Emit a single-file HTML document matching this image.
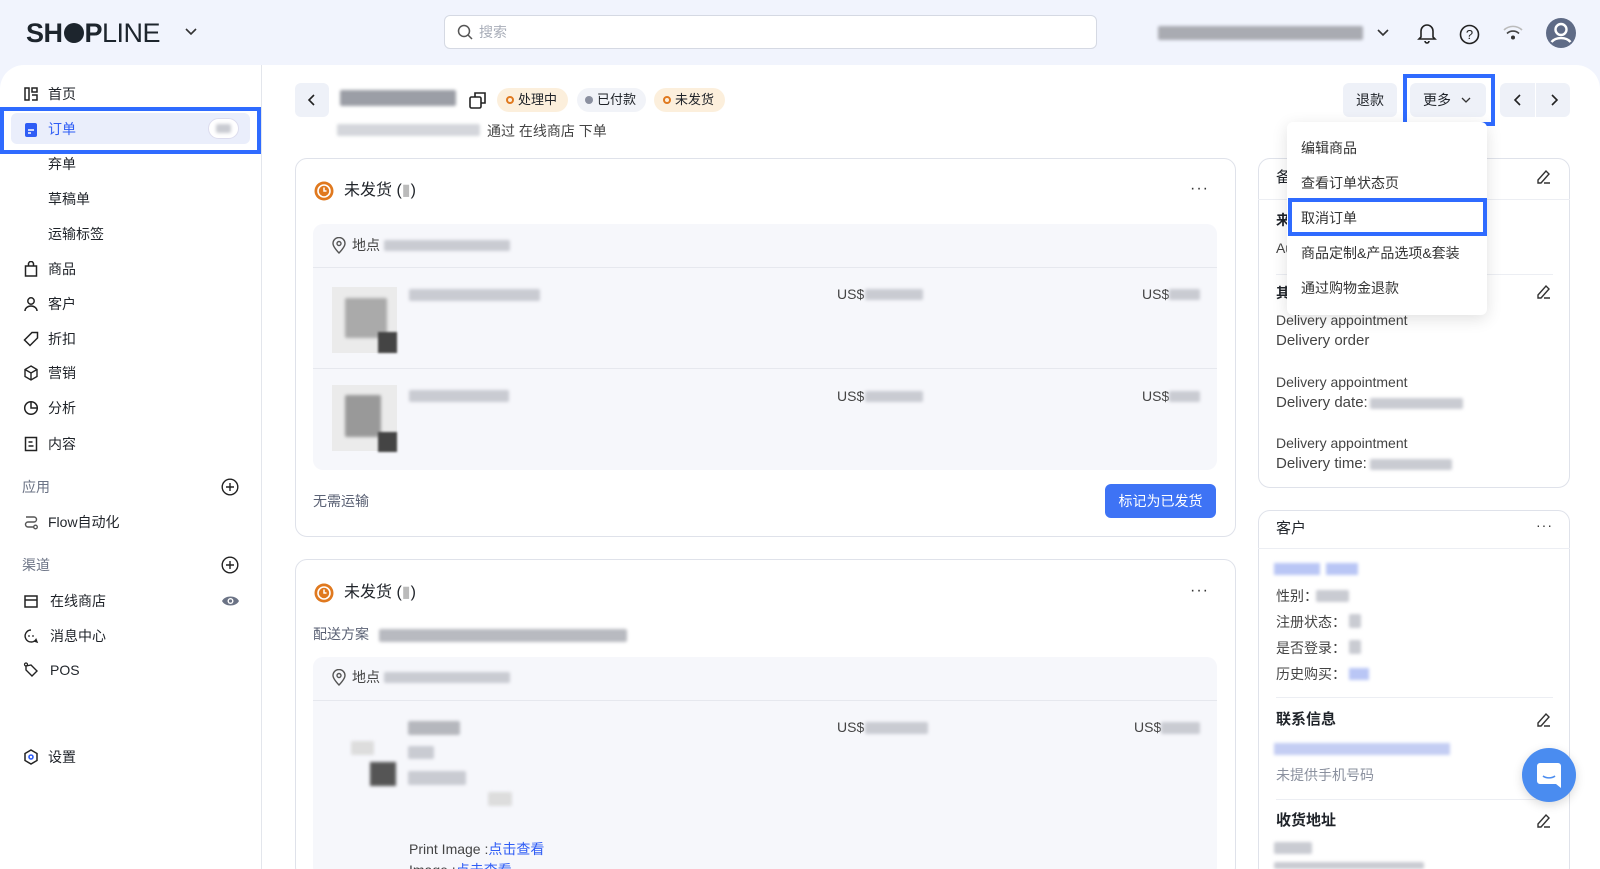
<!DOCTYPE html>
<html style="width:1600px;height:869px;overflow:hidden"><head><meta charset="utf-8">
<style>
*{box-sizing:border-box;margin:0;padding:0}
body{width:1600px;height:869px;overflow:hidden;background:#f1f4fd;font-family:"Liberation Sans","Noto Sans CJK SC",sans-serif;color:#1f2329;font-size:14px;position:relative}
.a{position:absolute}
.t{position:absolute;white-space:nowrap;line-height:20px}
.blur{position:absolute;background:#c9cbd2;filter:blur(1.5px);border-radius:2px}
.bb{position:absolute;background:#b9c6f5;filter:blur(1.5px)}
.nav{position:absolute;left:48px;font-size:14px;line-height:20px}
.ic{position:absolute;left:23px;width:16px;height:16px}
.card{position:absolute;background:#fff;border:1px solid #dfe2ea;border-radius:12px}
.sec{color:#6b7385;font-size:14px}
.dots{position:absolute;font-size:16px;letter-spacing:1px;color:#333}
</style></head><body>
<div class="t" style="left:26px;top:17px;font-size:27px;line-height:32px;font-weight:bold;color:#1d252d;letter-spacing:-0.5px">SH<span style="display:inline-block;width:20px;height:20px;border-radius:50%;background:#1d252d;vertical-align:-1px;margin:0 1px"></span>P<span style="font-weight:normal">LINE</span></div>
<svg class="a" style="left:184px;top:27px" width="14" height="10" viewBox="0 0 14 10"><path d="M2 2l5 5 5-5" fill="none" stroke="#333" stroke-width="1.6"/></svg>
<div class="a" style="left:444px;top:15px;width:653px;height:34px;background:#fff;border:1px solid #d5d9e3;border-radius:6px"></div>
<svg class="a" style="left:457px;top:24px" width="16" height="16" viewBox="0 0 16 16"><circle cx="7" cy="7" r="5.5" fill="none" stroke="#555" stroke-width="1.5"/><path d="M11 11l4 4" stroke="#555" stroke-width="1.5"/></svg>
<div class="t" style="left:479px;top:22px;color:#a8adb8">搜索</div>
<div class="blur" style="left:1158px;top:26px;width:205px;height:14px;background:#a9abb2"></div>
<svg class="a" style="left:1376px;top:28px" width="14" height="10"><path d="M2 2l5 5 5-5" fill="none" stroke="#333" stroke-width="1.6"/></svg>
<svg class="a" style="left:1417px;top:22px" width="20" height="22" viewBox="0 0 20 22"><path d="M4 15V9a6 6 0 0112 0v6l2 2H2zM8 19a2 2 0 004 0" fill="none" stroke="#222" stroke-width="1.6"/></svg>
<svg class="a" style="left:1459px;top:24px" width="21" height="21"><circle cx="10.5" cy="10.5" r="9" fill="none" stroke="#222" stroke-width="1.6"/><text x="10.5" y="15" font-size="13" text-anchor="middle" font-family="Liberation Sans" fill="#222">?</text></svg>
<svg class="a" style="left:1502px;top:25px" width="22" height="16" viewBox="0 0 22 16"><path d="M2 5a13 13 0 0118 0" fill="none" stroke="#bbb" stroke-width="1.6"/><path d="M5 8.5a8.5 8.5 0 0112 0" fill="none" stroke="#444" stroke-width="1.6"/><circle cx="11" cy="12.5" r="2" fill="#333"/></svg>
<svg class="a" style="left:1545px;top:17px" width="32" height="32" viewBox="0 0 32 32"><circle cx="16" cy="16" r="15" fill="#5f6b86"/><circle cx="16" cy="12.5" r="5.5" fill="none" stroke="#fff" stroke-width="2.4"/><path d="M6.5 25a11 8 0 0119 0" fill="none" stroke="#fff" stroke-width="2.4"/></svg>

<div class="a" style="left:0;top:65px;width:1600px;height:804px;background:#fff;border-radius:24px 24px 0 0"></div>
<div class="a" style="left:261px;top:65px;width:1px;height:804px;background:#e3e6ec"></div>

<div class="a" style="left:0;top:107px;width:261px;height:47px;border:4px solid #2f6bff"></div>
<div class="a" style="left:11px;top:113px;width:239px;height:31px;background:#eaeefb;border-radius:6px"></div>
<div class="a" style="left:208px;top:118px;width:31px;height:21px;background:#fff;border:1px solid #dde;border-radius:11px"></div>
<div class="blur" style="left:216px;top:124px;width:15px;height:9px"></div>
<svg class="ic" style="top:86px" viewBox="0 0 16 16"><path d="M2 2h4v12H2zM9 2h5v4H9zM9 9h5v5H9" fill="none" stroke="#222" stroke-width="1.5"/></svg>
<div class="nav" style="top:84px">首页</div>
<svg class="ic" style="top:122px" viewBox="0 0 16 16"><rect x="2" y="1" width="12" height="14" rx="2" fill="#2f5df5"/><path d="M5 8h6M5 11h3" stroke="#fff" stroke-width="1.5"/></svg>
<div class="nav" style="top:119px;color:#2f5df5">订单</div>
<div class="nav" style="top:154px">弃单</div>
<div class="nav" style="top:189px">草稿单</div>
<div class="nav" style="top:224px">运输标签</div>
<svg class="ic" style="top:261px" viewBox="0 0 16 16"><path d="M2.5 5h11v10h-11zM5.5 5V3a2.5 2.5 0 015 0v2" fill="none" stroke="#222" stroke-width="1.5"/></svg>
<div class="nav" style="top:259px">商品</div>
<svg class="ic" style="top:296px" viewBox="0 0 16 16"><circle cx="8" cy="5" r="3.2" fill="none" stroke="#222" stroke-width="1.5"/><path d="M2 15a6 5 0 0112 0" fill="none" stroke="#222" stroke-width="1.5"/></svg>
<div class="nav" style="top:294px">客户</div>
<svg class="ic" style="top:331px" viewBox="0 0 16 16"><path d="M9 1.5h5.5V7L7 14.5 1.5 9z" fill="none" stroke="#222" stroke-width="1.5"/></svg>
<div class="nav" style="top:329px">折扣</div>
<svg class="ic" style="top:365px" viewBox="0 0 16 16"><path d="M8 1l6 3.5v7L8 15l-6-3.5v-7zM2 4.5L8 8l6-3.5M8 8v7" fill="none" stroke="#222" stroke-width="1.4"/></svg>
<div class="nav" style="top:363px">营销</div>
<svg class="ic" style="top:400px" viewBox="0 0 16 16"><circle cx="8" cy="8" r="6.3" fill="none" stroke="#222" stroke-width="1.5"/><path d="M8 1.7V8h6.3" fill="none" stroke="#222" stroke-width="1.5"/></svg>
<div class="nav" style="top:398px">分析</div>
<svg class="ic" style="top:436px" viewBox="0 0 16 16"><path d="M2.5 1.5h11v13h-11zM5.5 6h4M5.5 10h5" fill="none" stroke="#222" stroke-width="1.5"/></svg>
<div class="nav" style="top:434px">内容</div>
<div class="t sec" style="left:22px;top:477px">应用</div>
<svg class="a" style="left:221px;top:478px" width="18" height="18"><circle cx="9" cy="9" r="7.8" fill="none" stroke="#222" stroke-width="1.4"/><path d="M9 5v8M5 9h8" stroke="#222" stroke-width="1.4"/></svg>
<svg class="ic" style="top:514px" viewBox="0 0 16 16"><path d="M3 3h8a2.5 2.5 0 010 5H5a2.5 2.5 0 000 5h6" fill="none" stroke="#555" stroke-width="1.4"/><circle cx="12.5" cy="13" r="1.8" fill="none" stroke="#555" stroke-width="1.3"/></svg>
<div class="nav" style="top:512px">Flow自动化</div>
<div class="t sec" style="left:22px;top:555px">渠道</div>
<svg class="a" style="left:221px;top:556px" width="18" height="18"><circle cx="9" cy="9" r="7.8" fill="none" stroke="#222" stroke-width="1.4"/><path d="M9 5v8M5 9h8" stroke="#222" stroke-width="1.4"/></svg>
<svg class="ic" style="top:593px" viewBox="0 0 16 16"><path d="M2 3h12v11H2zM2 7h12" fill="none" stroke="#222" stroke-width="1.5"/></svg>
<div class="nav" style="left:50px;top:591px">在线商店</div>
<svg class="a" style="left:221px;top:594px" width="19" height="14" viewBox="0 0 19 14"><path d="M1 7c3-6 14-6 17 0-3 6-14 6-17 0z" fill="#6b7385"/><circle cx="9.5" cy="7" r="3" fill="#fff"/><circle cx="9.5" cy="7" r="1.6" fill="#6b7385"/></svg>
<svg class="ic" style="top:628px" viewBox="0 0 16 16"><path d="M8 2a6 6 0 105 9.5L14 14l-3-1" fill="none" stroke="#222" stroke-width="1.4"/><circle cx="6" cy="8" r=".9" fill="#222"/><circle cx="10" cy="8" r=".9" fill="#222"/></svg>
<div class="nav" style="left:50px;top:626px">消息中心</div>
<svg class="ic" style="top:662px" viewBox="0 0 16 16"><path d="M3 4l5-1 6 6-5 5-6-6z" fill="none" stroke="#222" stroke-width="1.4"/><circle cx="3" cy="2.5" r="1.5" fill="none" stroke="#222" stroke-width="1.2"/></svg>
<div class="nav" style="left:50px;top:660px">POS</div>
<svg class="ic" style="top:749px" viewBox="0 0 16 16"><path d="M8 1l6 3.5v7L8 15l-6-3.5v-7z" fill="none" stroke="#222" stroke-width="1.5"/><circle cx="8" cy="8" r="2" fill="none" stroke="#2f5df5" stroke-width="1.6"/></svg>
<div class="nav" style="top:747px">设置</div>

<div class="a" style="left:295px;top:83px;width:34px;height:34px;background:#eef1f8;border-radius:6px"></div>
<svg class="a" style="left:307px;top:94px" width="10" height="12"><path d="M7 1L2 6l5 5" fill="none" stroke="#222" stroke-width="1.6"/></svg>
<div class="blur" style="left:340px;top:90px;width:116px;height:16px;background:#9b9ea6"></div>
<svg class="a" style="left:468px;top:90px" width="20" height="20" viewBox="0 0 20 20"><rect x="2" y="7" width="11" height="11" rx="1.5" fill="none" stroke="#222" stroke-width="1.6"/><path d="M7 7V3h10v10h-4" fill="none" stroke="#222" stroke-width="1.6"/></svg>
<div class="a" style="left:497px;top:88px;width:71px;height:24px;background:#fcefdc;border-radius:12px"></div>
<div class="a" style="left:506px;top:96px;width:8px;height:8px;border:2px solid #e0791f;border-radius:50%"></div>
<div class="t" style="left:518px;top:90px;font-size:13px">处理中</div>
<div class="a" style="left:577px;top:88px;width:69px;height:24px;background:#f1f3f8;border-radius:12px"></div>
<div class="a" style="left:585px;top:96px;width:8px;height:8px;background:#8b90a0;border-radius:50%"></div>
<div class="t" style="left:597px;top:90px;font-size:13px">已付款</div>
<div class="a" style="left:654px;top:88px;width:71px;height:24px;background:#fcefdc;border-radius:12px"></div>
<div class="a" style="left:663px;top:96px;width:8px;height:8px;border:2px solid #e0791f;border-radius:50%"></div>
<div class="t" style="left:675px;top:90px;font-size:13px">未发货</div>
<div class="blur" style="left:337px;top:124px;width:143px;height:12px;background:#d4d6db"></div>
<div class="t" style="left:487px;top:121px;color:#444">通过 在线商店 下单</div>

<div class="a" style="left:1343px;top:83px;width:54px;height:34px;background:#eef1f8;border-radius:6px"></div>
<div class="t" style="left:1356px;top:90px">退款</div>
<div class="a" style="left:1403px;top:74px;width:92px;height:52px;border:4px solid #2f6bff"></div>
<div class="a" style="left:1410px;top:83px;width:76px;height:34px;background:#eef1f8;border-radius:6px"></div>
<div class="t" style="left:1423px;top:90px">更多</div>
<svg class="a" style="left:1461px;top:97px" width="10" height="7"><path d="M1 1l4 4 4-4" fill="none" stroke="#333" stroke-width="1.3"/></svg>
<div class="a" style="left:1500px;top:83px;width:70px;height:34px;background:#eef1f8;border-radius:6px"></div>
<div class="a" style="left:1535px;top:83px;width:1px;height:34px;background:#fff"></div>
<svg class="a" style="left:1513px;top:94px" width="10" height="12"><path d="M7 1L2 6l5 5" fill="none" stroke="#222" stroke-width="1.6"/></svg>
<svg class="a" style="left:1549px;top:94px" width="10" height="12"><path d="M3 1l5 5-5 5" fill="none" stroke="#222" stroke-width="1.6"/></svg>

<div class="card" style="left:295px;top:158px;width:941px;height:379px"></div>
<svg class="a" style="left:314px;top:181px" width="20" height="20"><circle cx="10" cy="10" r="9.5" fill="#e0791f"/><circle cx="10" cy="10" r="6" fill="none" stroke="#fff" stroke-width="1.6"/><path d="M10 6.5V10h2.5" fill="none" stroke="#fff" stroke-width="1.5"/></svg>
<div class="t" style="left:344px;top:180px;font-size:16px;line-height:22px">未发货 (<span style="color:#bbb">▮</span>)</div>
<div class="dots" style="left:1190px;top:180px">···</div>
<div class="a" style="left:313px;top:224px;width:904px;height:246px;background:#f6f7fb;border-radius:10px"></div>
<div class="a" style="left:313px;top:267px;width:904px;height:1px;background:#e6e8ee"></div>
<div class="a" style="left:313px;top:368px;width:904px;height:1px;background:#e6e8ee"></div>
<svg class="a" style="left:332px;top:237px" width="14" height="17" viewBox="0 0 14 17"><path d="M7 16s-6-6-6-9.5a6 6 0 0112 0C13 10 7 16 7 16z" fill="none" stroke="#555" stroke-width="1.4"/><circle cx="7" cy="6.5" r="2" fill="none" stroke="#555" stroke-width="1.4"/></svg>
<div class="t" style="left:352px;top:235px;color:#444">地点</div>
<div class="blur" style="left:384px;top:240px;width:126px;height:11px"></div>
<div class="a" style="left:332px;top:287px;width:65px;height:66px;background:#ebebeb"></div>
<div class="blur" style="left:345px;top:298px;width:42px;height:40px;background:#aaa"></div>
<div class="a" style="left:378px;top:332px;width:19px;height:21px;background:#444;filter:blur(1px)"></div>
<div class="blur" style="left:409px;top:289px;width:131px;height:12px"></div>
<div class="t" style="left:837px;top:284px;color:#444">US$</div><div class="blur" style="left:865px;top:289px;width:58px;height:11px"></div>
<div class="t" style="left:1142px;top:284px;color:#444">US$</div><div class="blur" style="left:1169px;top:289px;width:31px;height:11px"></div>
<div class="a" style="left:332px;top:385px;width:65px;height:66px;background:#ebebeb"></div>
<div class="blur" style="left:345px;top:395px;width:36px;height:42px;background:#999"></div>
<div class="a" style="left:378px;top:432px;width:19px;height:20px;background:#444;filter:blur(1px)"></div>
<div class="blur" style="left:409px;top:390px;width:100px;height:12px"></div>
<div class="t" style="left:837px;top:386px;color:#444">US$</div><div class="blur" style="left:865px;top:391px;width:58px;height:11px"></div>
<div class="t" style="left:1142px;top:386px;color:#444">US$</div><div class="blur" style="left:1169px;top:391px;width:31px;height:11px"></div>
<div class="t" style="left:313px;top:491px;color:#5b6275">无需运输</div>
<div class="a" style="left:1105px;top:484px;width:111px;height:34px;background:#3e73f5;border-radius:6px;color:#fff;text-align:center;line-height:34px">标记为已发货</div>

<div class="card" style="left:295px;top:559px;width:941px;height:320px"></div>
<svg class="a" style="left:314px;top:583px" width="20" height="20"><circle cx="10" cy="10" r="9.5" fill="#e0791f"/><circle cx="10" cy="10" r="6" fill="none" stroke="#fff" stroke-width="1.6"/><path d="M10 6.5V10h2.5" fill="none" stroke="#fff" stroke-width="1.5"/></svg>
<div class="t" style="left:344px;top:582px;font-size:16px;line-height:22px">未发货 (<span style="color:#bbb">▮</span>)</div>
<div class="dots" style="left:1190px;top:582px">···</div>
<div class="t" style="left:313px;top:624px;color:#5b6275">配送方案</div>
<div class="blur" style="left:379px;top:629px;width:248px;height:13px;background:#b8bac0"></div>
<div class="a" style="left:313px;top:657px;width:904px;height:220px;background:#f6f7fb;border-radius:10px"></div>
<div class="a" style="left:313px;top:700px;width:904px;height:1px;background:#e6e8ee"></div>
<svg class="a" style="left:332px;top:669px" width="14" height="17" viewBox="0 0 14 17"><path d="M7 16s-6-6-6-9.5a6 6 0 0112 0C13 10 7 16 7 16z" fill="none" stroke="#555" stroke-width="1.4"/><circle cx="7" cy="6.5" r="2" fill="none" stroke="#555" stroke-width="1.4"/></svg>
<div class="t" style="left:352px;top:667px;color:#444">地点</div>
<div class="blur" style="left:384px;top:672px;width:126px;height:11px"></div>
<div class="blur" style="left:408px;top:721px;width:52px;height:14px;background:#b5b7bd"></div>
<div class="blur" style="left:408px;top:746px;width:26px;height:13px"></div>
<div class="blur" style="left:408px;top:771px;width:58px;height:14px"></div>
<div class="blur" style="left:351px;top:741px;width:23px;height:14px;background:#ddd"></div>
<div class="a" style="left:370px;top:762px;width:26px;height:24px;background:#555;filter:blur(1.5px)"></div>
<div class="blur" style="left:488px;top:792px;width:24px;height:14px;background:#ddd"></div>
<div class="t" style="left:837px;top:717px;color:#444">US$</div><div class="blur" style="left:865px;top:722px;width:63px;height:12px"></div>
<div class="t" style="left:1134px;top:717px;color:#444">US$</div><div class="blur" style="left:1161px;top:722px;width:39px;height:12px"></div>
<div class="t" style="left:409px;top:839px;color:#444">Print Image :<span style="color:#2f5df5">点击查看</span></div>
<div class="t" style="left:409px;top:860px;color:#444">Image :<span style="color:#2f5df5">点击查看</span></div>

<div class="card" style="left:1258px;top:158px;width:312px;height:330px"></div>
<div class="t" style="left:1276px;top:168px;font-size:15px">备注</div>
<svg class="a" style="left:1535px;top:168px" width="17" height="17" viewBox="0 0 17 17"><path d="M3 12L11 3l3 3-8 9H3zM9 15h6" fill="none" stroke="#333" stroke-width="1.4"/></svg>
<div class="a" style="left:1258px;top:199px;width:312px;height:1px;background:#eceef3"></div>
<div class="t" style="left:1276px;top:210px;font-size:14px;font-weight:bold">来源</div>
<div class="t" style="left:1276px;top:238px;color:#444">Au</div>
<div class="a" style="left:1276px;top:274px;width:277px;height:1px;background:#eceef3"></div>
<div class="t" style="left:1276px;top:283px;font-size:14px;font-weight:bold">其他</div>
<svg class="a" style="left:1535px;top:283px" width="17" height="17" viewBox="0 0 17 17"><path d="M3 12L11 3l3 3-8 9H3zM9 15h6" fill="none" stroke="#333" stroke-width="1.4"/></svg>
<div class="t" style="left:1276px;top:310px;color:#444">Delivery appointment</div>
<div class="t" style="left:1276px;top:331px;color:#444;font-size:15px">Delivery order</div>
<div class="t" style="left:1276px;top:372px;color:#444">Delivery appointment</div>
<div class="t" style="left:1276px;top:393px;color:#444;font-size:15px">Delivery date:</div>
<div class="blur" style="left:1370px;top:398px;width:93px;height:11px"></div>
<div class="t" style="left:1276px;top:433px;color:#444">Delivery appointment</div>
<div class="t" style="left:1276px;top:454px;color:#444;font-size:15px">Delivery time:</div>
<div class="blur" style="left:1370px;top:459px;width:82px;height:11px"></div>

<div class="a" style="left:1287px;top:122px;width:200px;height:193px;background:#fff;border-radius:6px;box-shadow:0 4px 16px rgba(0,0,0,.12)"></div>
<div class="t" style="left:1301px;top:138px;color:#333">编辑商品</div>
<div class="t" style="left:1301px;top:173px;color:#333">查看订单状态页</div>
<div class="a" style="left:1288px;top:198px;width:199px;height:38px;border:4px solid #2f6bff;background:#fff"></div>
<div class="t" style="left:1301px;top:208px;color:#333">取消订单</div>
<div class="t" style="left:1301px;top:243px;color:#333">商品定制&amp;产品选项&amp;套装</div>
<div class="t" style="left:1301px;top:278px;color:#333">通过购物金退款</div>

<div class="card" style="left:1258px;top:510px;width:312px;height:370px"></div>
<div class="t" style="left:1276px;top:519px;font-size:15px">客户</div>
<div class="dots" style="left:1536px;top:517px;font-size:14px">···</div>
<div class="a" style="left:1258px;top:548px;width:312px;height:1px;background:#eceef3"></div>
<div class="bb" style="left:1274px;top:563px;width:46px;height:12px"></div><div class="bb" style="left:1326px;top:563px;width:32px;height:12px"></div>
<div class="t" style="left:1276px;top:586px;color:#444">性别：</div><div class="blur" style="left:1316px;top:590px;width:33px;height:12px"></div>
<div class="t" style="left:1276px;top:612px;color:#444">注册状态：</div><div class="blur" style="left:1349px;top:614px;width:12px;height:14px"></div>
<div class="t" style="left:1276px;top:638px;color:#444">是否登录：</div><div class="blur" style="left:1349px;top:640px;width:12px;height:14px"></div>
<div class="t" style="left:1276px;top:664px;color:#444">历史购买：</div><div class="bb" style="left:1349px;top:668px;width:20px;height:12px"></div>
<div class="a" style="left:1276px;top:697px;width:277px;height:1px;background:#eceef3"></div>
<div class="t" style="left:1276px;top:710px;font-size:15px;font-weight:bold">联系信息</div>
<svg class="a" style="left:1535px;top:711px" width="17" height="17" viewBox="0 0 17 17"><path d="M3 12L11 3l3 3-8 9H3zM9 15h6" fill="none" stroke="#333" stroke-width="1.4"/></svg>
<div class="bb" style="left:1274px;top:743px;width:176px;height:12px;background:#c4cdf3"></div>
<div class="t" style="left:1276px;top:765px;color:#8a909e">未提供手机号码</div>
<div class="a" style="left:1276px;top:799px;width:277px;height:1px;background:#eceef3"></div>
<div class="t" style="left:1276px;top:811px;font-size:15px;font-weight:bold">收货地址</div>
<svg class="a" style="left:1535px;top:812px" width="17" height="17" viewBox="0 0 17 17"><path d="M3 12L11 3l3 3-8 9H3zM9 15h6" fill="none" stroke="#333" stroke-width="1.4"/></svg>
<div class="blur" style="left:1274px;top:842px;width:38px;height:12px"></div>
<div class="blur" style="left:1274px;top:862px;width:150px;height:7px"></div>

<div class="a" style="left:1522px;top:748px;width:54px;height:54px;border-radius:50%;background:#4a8cf0;box-shadow:0 3px 10px rgba(0,0,0,.15)"></div>
<svg class="a" style="left:1536px;top:762px" width="26" height="27" viewBox="0 0 26 27"><path d="M4 1h18a3 3 0 013 3v22l-5-4H4a3 3 0 01-3-3V4a3 3 0 013-3z" fill="#fff"/><path d="M7 14c3 2.5 9 2.5 12 0" fill="none" stroke="#4a8cf0" stroke-width="1.6"/></svg>
</body></html>
